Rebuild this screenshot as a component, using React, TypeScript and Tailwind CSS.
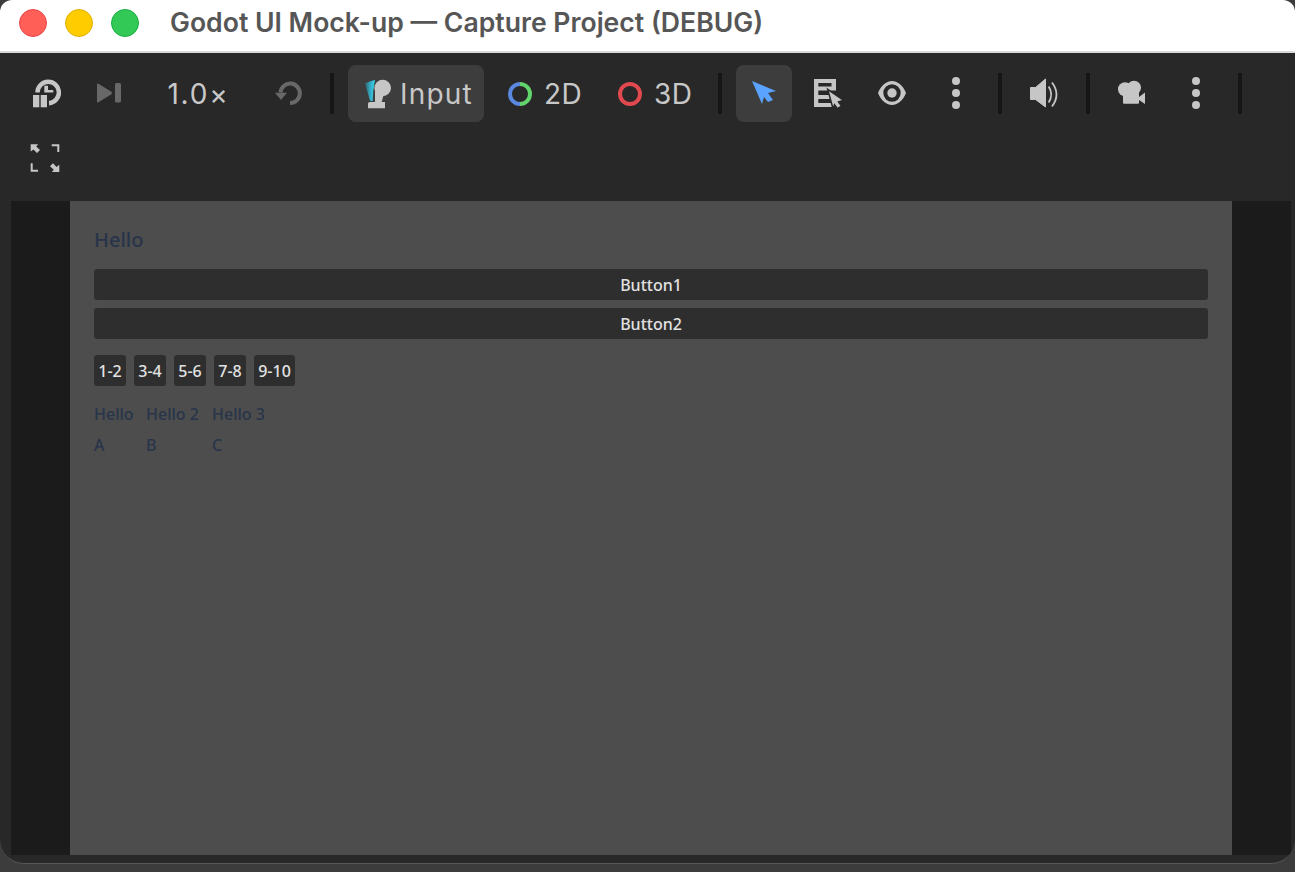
import React from "react";

const C = "#c6c6c6";
const D = "#686868";
const BG = "#282828";

function Svg({ children, w = 32, h = 32 }: { children: React.ReactNode; w?: number; h?: number }) {
  return (
    <svg width={w} height={h} viewBox={`0 0 ${w} ${h}`} fill="none" className="block shrink-0">
      {children}
    </svg>
  );
}

function TimePause() {
  return (
    <Svg>
      <path d="M8.500 15.500A10.700 10.700 0 1 1 20 26.200" stroke={C} strokeWidth="4.500" />
      <path d="M15.300 8.700h3.700v4.300h5.300v2.500h-9z" fill={C} />
      <rect x="4" y="18" width="6.300" height="12.300" fill={C} />
      <rect x="11.700" y="18" width="6.300" height="12.300" fill={C} />
    </Svg>
  );
}
function Step() {
  return (
    <Svg>
      <path d="M4 7.500q0-1.500 1.500-.7L18 14.500q2 1.500 0 3L5.500 25.200q-1.500.8-1.500-.7z" fill={D} />
      <rect x="22" y="6" width="6" height="19.500" rx="1.500" fill={D} />
    </Svg>
  );
}
function Undo() {
  return (
    <Svg>
      <path d="M8.500 15.500A9.700 9.700 0 1 1 18 26" stroke={D} strokeWidth="4" />
      <path d="M3 15.700h12l-6 7.300z" fill={D} />
    </Svg>
  );
}
function InputIcon() {
  return (
    <Svg w={34} h={37}>
      <defs>
        <linearGradient id="inputShade" x1="0" y1="0" x2="1" y2="0">
          <stop offset="0" stopColor="#33606c" />
          <stop offset="0.6" stopColor="#34b4cf" />
          <stop offset="1" stopColor="#3ccbe8" />
        </linearGradient>
      </defs>
      <path d="M1 8.300L11 4.700 9.300 15.700 8.700 26.300 6 25.700z" fill="url(#inputShade)" />
      <circle cx="18.700" cy="13" r="8.300" fill={C} />
      <path d="M11 15h8.300v6l-1.600 6H21q0 0 0 1.500v4.800H4v-4.800Q4 27 6 27h5z" fill={C} />
    </Svg>
  );
}
function Ring2D() {
  return (
    <Svg w={24} h={24}>
      <path d="M12 2A10 10 0 0 0 12 22" stroke="#5a88e0" strokeWidth="4" />
      <path d="M12 2A10 10 0 0 1 12 22" stroke="#62d46c" strokeWidth="4" />
    </Svg>
  );
}
function Ring3D() {
  return (
    <Svg w={24} h={24}>
      <circle cx="12" cy="12" r="10" stroke="#e2494f" strokeWidth="4" />
    </Svg>
  );
}
function Arrow() {
  return (
    <Svg>
      <path d="M0 0L24 10 16 12 21 19 16 21 12 16 10 23z" transform="translate(4 4)" fill="#5aa3ff" />
    </Svg>
  );
}
function ListSelect() {
  return (
    <Svg>
      <path d="M2 2h22v11.500H6.300V18H18v4H6.300v4H20v4H2zM6.300 6v3.500H19.500V6z" fill={C} fillRule="evenodd" />
      <path d="M15.700 12.300L31.700 23.300 26.500 25l3 4-4 2.700-3-4-1.500 4z" fill={C} stroke={BG} strokeWidth="1.500" strokeLinejoin="miter" />
    </Svg>
  );
}
function Eye() {
  return (
    <Svg>
      <path d="M2 16C5 8 11 4 16 4s11 4 14 12c-3 8-9 12-14 12S5 24 2 16z" fill={C} />
      <circle cx="16" cy="16" r="8.700" fill={BG} />
      <circle cx="16" cy="16" r="4.700" fill={C} />
    </Svg>
  );
}
function Kebab() {
  return (
    <Svg>
      <circle cx="16" cy="4" r="4" fill={C} />
      <circle cx="16" cy="16" r="4" fill={C} />
      <circle cx="16" cy="28" r="4" fill={C} />
    </Svg>
  );
}
function Speaker() {
  return (
    <Svg>
      <path d="M2.500 10.500h5L17.500 2v28L7.500 22.500h-5z" fill={C} stroke={C} strokeLinejoin="round" />
      <path d="M20.700 9.500q5 8 0 16" stroke={C} strokeWidth="1.800" />
      <path d="M24 5.500q9 12 0 24" stroke={C} strokeWidth="1.800" />
    </Svg>
  );
}
function Camera() {
  return (
    <Svg>
      <circle cx="9" cy="12.300" r="7" fill={C} />
      <circle cx="18" cy="10.700" r="7" fill={C} />
      <rect x="7" y="14" width="16" height="12.700" rx="1" fill={C} />
      <path d="M23 20l6-4.500V27l-6-4z" fill={C} />
    </Svg>
  );
}
function Expand() {
  return (
    <Svg>
      <path d="M1.700 2.300h7.500L7.200 4.500 11 8l-3 3-3.500-3.600-2.800 2.100z" fill={C} />
      <path d="M30.300 30h-7.500l2-2.200L21 24.300l3-3 3.500 3.600 2.800-2.100z" fill={C} />
      <path d="M22.700 3.300h6.600V10" stroke={C} strokeWidth="2" />
      <path d="M2.700 21.300v7.400H9" stroke={C} strokeWidth="2" />
    </Svg>
  );
}

function IconBtn({ children, active }: { children: React.ReactNode; active?: boolean }) {
  return (
    <div className={`flex h-[57px] w-[56px] items-center justify-center rounded-lg pb-px ${active ? "bg-[#3d3d3d]" : ""}`}>
      {children}
    </div>
  );
}
function Sep() {
  return (
    <div className="flex h-[57px] w-4 items-center justify-center">
      <div className="h-[41px] w-1 bg-[#161616]" />
    </div>
  );
}
function TextBtn({ icon, label, active, w, gap, track }: { icon: React.ReactNode; label: string; active?: boolean; w: string; gap: string; track: string }) {
  return (
    <div className={`flex h-[57px] items-center rounded-lg pl-4 text-[28px] font-[380] text-[#c8c8c8] ${w} ${gap} ${track} ${active ? "bg-[#3d3d3d]" : ""}`}>
      {icon}
      <span>{label}</span>
    </div>
  );
}

const small: [string, string][] = [
  ["1-2", "w-8"],
  ["3-4", "w-8"],
  ["5-6", "w-8"],
  ["7-8", "w-8"],
  ["9-10", "w-[41px]"],
];

export default function App() {
  return (
    <div className="h-[872px] w-[1295px] overflow-hidden bg-[#3c3c3c] font-['Inter',sans-serif]">
      <div className="flex h-[864px] flex-col overflow-hidden rounded-t-xl rounded-b-[24px] border-b border-[#565656] bg-[#282828]">
        <div className="flex h-[53px] shrink-0 items-center border-b-2 border-[#d9d9d9] bg-white pb-[5px] pl-[19px]">
          <div className="flex gap-[18px]">
            <div className="h-7 w-7 rounded-full border border-[#e6484d] bg-[#ff5f57]" />
            <div className="h-7 w-7 rounded-full border border-[#e0ad00] bg-[#ffcc00]" />
            <div className="h-7 w-7 rounded-full border border-[#19ad3f] bg-[#33c956]" />
          </div>
          <div className="ml-[31px] text-[26.600px] font-semibold text-[#565656]">
            Godot UI Mock-up — Capture Project (DEBUG)
          </div>
        </div>

        <div className="flex h-[148px] shrink-0 flex-wrap content-start gap-x-2 gap-y-2 pl-[17px] pt-3">
          <IconBtn><TimePause /></IconBtn>
          <IconBtn><Step /></IconBtn>
          <div className="flex h-[57px] w-[107px] items-center justify-center text-[28px] font-[380] tracking-[1.800px] text-[#c8c8c8]">1.0×</div>
          <IconBtn><Undo /></IconBtn>
          <Sep />
          <TextBtn active w="w-[136px]" gap="gap-0.5" track="tracking-[1.200px]" icon={<InputIcon />} label="Input" />
          <TextBtn w="w-[102px]" gap="gap-3" track="tracking-[0.500px]" icon={<Ring2D />} label="2D" />
          <TextBtn w="w-[102px]" gap="gap-3" track="tracking-[0.500px]" icon={<Ring3D />} label="3D" />
          <Sep />
          <IconBtn active><Arrow /></IconBtn>
          <IconBtn><ListSelect /></IconBtn>
          <IconBtn><Eye /></IconBtn>
          <IconBtn><Kebab /></IconBtn>
          <Sep />
          <IconBtn><Speaker /></IconBtn>
          <Sep />
          <IconBtn><Camera /></IconBtn>
          <IconBtn><Kebab /></IconBtn>
          <Sep />
          <IconBtn><Expand /></IconBtn>
        </div>

        <div className="ml-[11px] mr-[4px] flex h-[654px] shrink-0 justify-center bg-[#1b1b1b] pr-[59px] pl-[59px]">
          <div className="flex w-[1162px] flex-col bg-[#4d4d4d] px-6 pt-[26px] font-['Noto_Sans',sans-serif] font-medium">
            <div className="h-[26px] text-[20px] leading-[26px] text-[#28344a]">Hello</div>
            <div className="mt-4 flex flex-col gap-2 text-[16px] text-[#e2e2e2]">
              <div className="flex h-[31px] items-center justify-center rounded-[3px] bg-[#2e2e2e]">Button1</div>
              <div className="flex h-[31px] items-center justify-center rounded-[3px] bg-[#2e2e2e]">Button2</div>
            </div>
            <div className="mt-4 flex gap-2 text-[16px] text-[#e2e2e2]">
              {small.map(([t, w]) => (
                <div key={t} className={`flex h-[31px] items-center justify-center rounded-[3px] bg-[#2e2e2e] ${w}`}>{t}</div>
              ))}
            </div>
            <div className="mt-[18px] grid w-fit grid-cols-[40px_54px_auto] gap-x-3 gap-y-[10px] text-[16px] leading-[21px] text-[#28344a]">
              <div>Hello</div>
              <div>Hello 2</div>
              <div>Hello 3</div>
              <div>A</div>
              <div>B</div>
              <div>C</div>
            </div>
          </div>
        </div>
      </div>
    </div>
  );
}
